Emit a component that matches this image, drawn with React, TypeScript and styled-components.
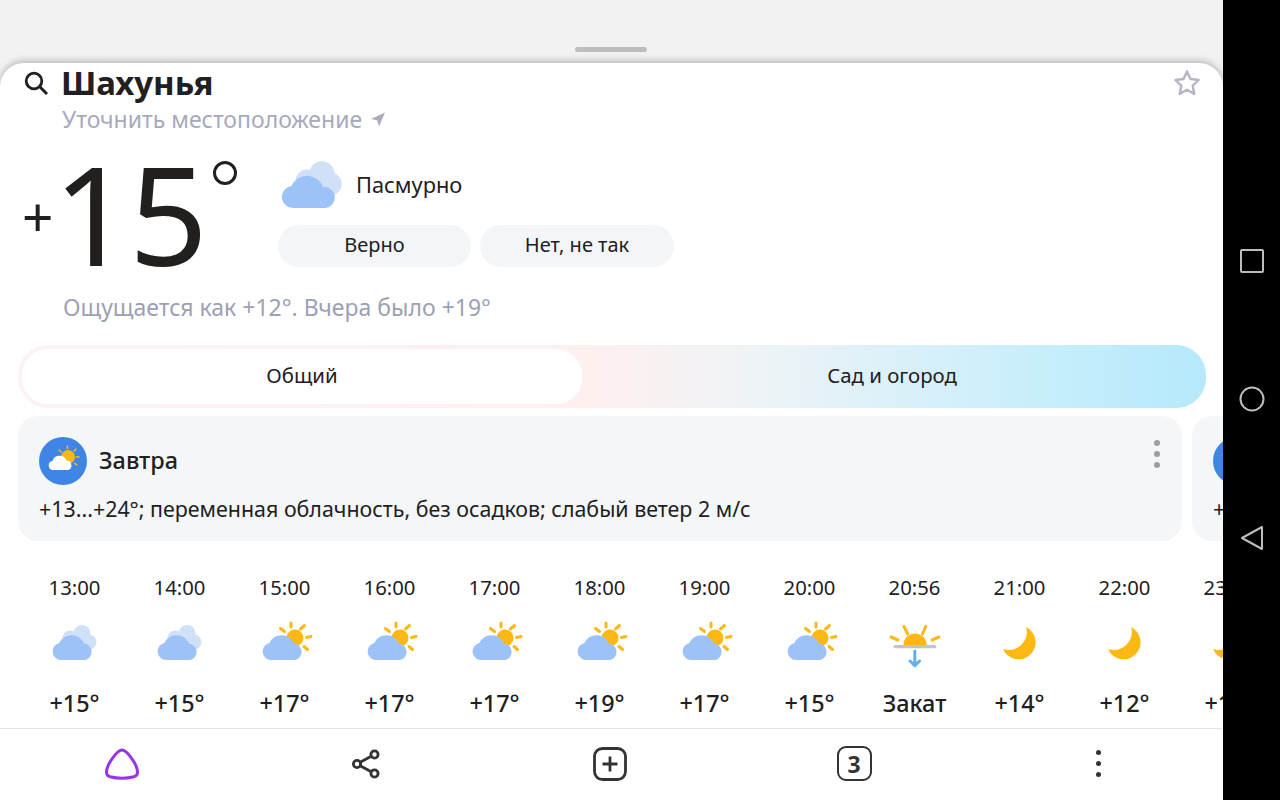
import React from 'react';
import styled, { createGlobalStyle } from 'styled-components';

const GlobalStyle = createGlobalStyle`
  html, body {
    margin: 0;
    padding: 0;
    background: #000;
  }
  * {
    box-sizing: border-box;
  }
`;

type Kind = 'cloudy' | 'partly' | 'sunset' | 'moon';

interface Hour {
  time: string;
  kind: Kind;
  value: string;
}

const hours: Hour[] = [
  { time: '13:00', kind: 'cloudy', value: '+15°' },
  { time: '14:00', kind: 'cloudy', value: '+15°' },
  { time: '15:00', kind: 'partly', value: '+17°' },
  { time: '16:00', kind: 'partly', value: '+17°' },
  { time: '17:00', kind: 'partly', value: '+17°' },
  { time: '18:00', kind: 'partly', value: '+19°' },
  { time: '19:00', kind: 'partly', value: '+17°' },
  { time: '20:00', kind: 'partly', value: '+15°' },
  { time: '20:56', kind: 'sunset', value: 'Закат' },
  { time: '21:00', kind: 'moon', value: '+14°' },
  { time: '22:00', kind: 'moon', value: '+12°' },
  { time: '23:00', kind: 'moon', value: '+11°' },
];

const CLOUD = 'M9 28a8.6 8.6 0 0 1-1.6-17 A13.4 13.4 0 0 1 32 11.6 A8.3 8.3 0 0 1 33 28 Z';

const Sun = () => (
  <g>
    <circle cx="33" cy="6" r="8.5" fill="#fdb813" />
    <g stroke="#fdb813" strokeWidth="3" strokeLinecap="round">
      <path d="M18.5 -3.5l4 3" />
      <path d="M29 -9v4" />
      <path d="M42.500 -6.500l-4 3.500" />
      <path d="M44.500 5.500l4.500 -1" />
      <path d="M42 14.500l3.500 3" />
    </g>
  </g>
);

const WeatherIcon = ({ kind }: { kind: Kind }) => {
  if (kind === 'moon') {
    return (
      <svg width="56" height="48" viewBox="0 0 56 48">
        <path d="M34 2 A17 17 0 1 1 11 24 A18 18 0 0 0 34 2 Z" fill="#fdb813" />
      </svg>
    );
  }
  if (kind === 'sunset') {
    return (
      <svg width="56" height="48" viewBox="0 0 56 48">
        <path d="M16.500 20 A11.500 11.500 0 0 1 39.500 20 Z" fill="#fdb813" />
        <rect x="6.500" y="20" width="43" height="3.200" rx="1.600" fill="#c4c4c4" />
        <g stroke="#fdb813" strokeWidth="3" strokeLinecap="round">
          <path d="M4 12l7 3" />
          <path d="M17 1.500l3.600 7.400" />
          <path d="M38.800 1.500L35.400 9" />
          <path d="M52 12l-7 3" />
        </g>
        <path
          d="M27.800 26v14M23 36l4.800 4.600L32.600 36"
          stroke="#62aeee"
          strokeWidth="3"
          fill="none"
          strokeLinecap="round"
          strokeLinejoin="round"
        />
      </svg>
    );
  }
  return (
    <svg width="56" height="48" viewBox="-5 -7 56 48" overflow="visible">
      {kind === 'cloudy' ? (
        <g fill="#d0e0f7">
          <circle cx="30" cy="1.500" r="8.500" />
          <circle cx="18" cy="6" r="7.500" />
          <circle cx="37" cy="10" r="7.500" />
        </g>
      ) : (
        <Sun />
      )}
      <path d={CLOUD} fill="#9cc2f7" />
    </svg>
  );
};

const App = () => {
  return (
    <Frame>
      <GlobalStyle />
      <Screen>
        <TopBar>
          <Handle />
        </TopBar>
        <Sheet>
          <Header>
            <TitleRow>
              <SearchGlyph viewBox="0 0 24 24">
                <circle cx="10" cy="10" r="7.800" fill="none" stroke="#21201f" strokeWidth="2.800" />
                <path d="M15.800 15.800L23 23" stroke="#21201f" strokeWidth="3" />
              </SearchGlyph>
              <Title>Шахунья</Title>
              <StarGlyph viewBox="0 0 28 27">
                <path
                  d="M14 2.400l3.500 7.600 8.200 1-6 5.700 1.600 8.200L14 20.800l-7.300 4.100 1.600-8.200-6-5.700 8.200-1z"
                  fill="none"
                  stroke="#b4b6c8"
                  strokeWidth="2.400"
                  strokeLinejoin="round"
                />
              </StarGlyph>
            </TitleRow>
            <Locate>
              Уточнить местоположение
              <svg width="16" height="16" viewBox="0 0 16 16">
                <path d="M15 1.500L1 8l6.200 1.300L9 15.400z" fill="#a9abbf" />
              </svg>
            </Locate>
          </Header>

          <Current>
            <Temperature>
              <Plus>+</Plus>
              <Digits>15</Digits>
              <Degree />
            </Temperature>
            <Condition>
              <ConditionRow>
                <BigCloud viewBox="0 0 62 50">
                  <g fill="#d0e0f7">
                    <circle cx="40" cy="14" r="12.700" />
                    <circle cx="25" cy="21" r="11.500" />
                    <circle cx="48" cy="24" r="11.700" />
                  </g>
                  <path
                    d="M11 48a11 11 0 0 1-1.600-21.900 A17 17 0 0 1 41 27 A10.500 10.500 0 0 1 43.500 48 Z"
                    fill="#9cc2f7"
                  />
                </BigCloud>
                <ConditionText>Пасмурно</ConditionText>
              </ConditionRow>
              <Answers>
                <Answer $width={193}>Верно</Answer>
                <Answer $width={194}>Нет, не так</Answer>
              </Answers>
            </Condition>
          </Current>

          <Feels>Ощущается как +12°. Вчера было +19°</Feels>

          <Tabs>
            <Tab $active>Общий</Tab>
            <Tab>Сад и огород</Tab>
          </Tabs>

          <Cards>
            <Card>
              <CardHead>
                <Badge>
                  <svg width="48" height="48" viewBox="0 0 48 48">
                    <circle cx="29" cy="20" r="7" fill="#fdb813" />
                    <g stroke="#fdb813" strokeWidth="1.500" strokeLinecap="round">
                      <path d="M20 13l2 2" />
                      <path d="M28.500 9v2.600" />
                      <path d="M37 12l-2 2" />
                      <path d="M40 20h-3" />
                      <path d="M38 28l-2.400-1.600" />
                    </g>
                    <path
                      d="M14 33a4.600 4.600 0 0 1-.6-9.100 A7.600 7.600 0 0 1 27.600 23.600 A4.800 4.800 0 0 1 29 33 Z"
                      fill="#fff"
                    />
                  </svg>
                </Badge>
                <CardTitle>Завтра</CardTitle>
                <CardDots>
                  <i />
                  <i />
                  <i />
                </CardDots>
              </CardHead>
              <CardText>+13...+24°; переменная облачность, без осадков; слабый ветер 2 м/с</CardText>
            </Card>
            <Card>
              <CardHead>
                <Badge />
              </CardHead>
              <CardText>+13</CardText>
            </Card>
          </Cards>

          <HourStrip>
            {hours.map((h) => (
              <HourCell key={h.time}>
                <HourTime>{h.time}</HourTime>
                <HourIcon>
                  <WeatherIcon kind={h.kind} />
                </HourIcon>
                <HourValue>{h.value}</HourValue>
              </HourCell>
            ))}
          </HourStrip>

          <Toolbar>
            <ToolButton>
              <svg width="36" height="36" viewBox="0 -1 36 36">
                <path
                  d="M18 3C22.500 3 33.500 17 33.500 25.500C33.500 28 32 29 30 29.700C23 31.500 13 31.500 6 29.700C4 29 2.500 28 2.500 25.500C2.500 17 13.500 3 18 3z"
                  fill="none"
                  stroke="#9933e6"
                  strokeWidth="3"
                />
              </svg>
            </ToolButton>
            <ToolButton>
              <svg width="36" height="36" viewBox="0 0 36 36">
                <g fill="none" stroke="#333" strokeWidth="2.800">
                  <circle cx="26.500" cy="8.500" r="3.600" />
                  <circle cx="9" cy="18" r="3.600" />
                  <circle cx="26.500" cy="27.500" r="3.600" />
                  <path d="M12.200 16.200l11-6M12.200 19.800l11 6" />
                </g>
              </svg>
            </ToolButton>
            <ToolButton>
              <svg width="36" height="36" viewBox="0 0 36 36">
                <rect x="2.500" y="2.500" width="31" height="31" rx="8" fill="none" stroke="#333" strokeWidth="2.800" />
                <path d="M18 10.500v15M10.500 18h15" stroke="#333" strokeWidth="2.800" />
              </svg>
            </ToolButton>
            <ToolButton>
              <TabCount>3</TabCount>
            </ToolButton>
            <ToolButton>
              <MenuDots>
                <i />
                <i />
                <i />
              </MenuDots>
            </ToolButton>
          </Toolbar>
        </Sheet>
      </Screen>

      <NavBar>
        <svg width="24" height="24" viewBox="0 0 24 24">
          <rect x="1" y="1" width="22" height="22" rx="1" fill="none" stroke="#bdbdbd" strokeWidth="2" />
        </svg>
        <svg width="26" height="26" viewBox="0 0 26 26">
          <circle cx="13" cy="13" r="11.500" fill="none" stroke="#bdbdbd" strokeWidth="2" />
        </svg>
        <svg width="24" height="26" viewBox="0 0 24 26">
          <path d="M22 2v22L2 13z" fill="none" stroke="#bdbdbd" strokeWidth="2" strokeLinejoin="round" />
        </svg>
      </NavBar>
    </Frame>
  );
};

export default App;

const Frame = styled.div`
  display: flex;
  width: 1280px;
  height: 800px;
  overflow: hidden;
  font-family: 'Noto Sans', 'Open Sans', sans-serif;
  color: #21201f;
`;

const Screen = styled.div`
  display: flex;
  flex-direction: column;
  width: 1223px;
  height: 800px;
  background: #f2f2f2;
`;

const TopBar = styled.div`
  display: flex;
  justify-content: center;
  align-items: flex-end;
  flex: 0 0 63px;
  padding: 0 2px 11px 0;
`;

const Handle = styled.div`
  width: 72px;
  height: 5px;
  border-radius: 3px;
  background: #bdbdbd;
`;

const Sheet = styled.div`
  display: flex;
  flex-direction: column;
  flex: 1;
  min-height: 0;
  background: #fff;
  border-radius: 24px 24px 0 0;
  box-shadow: 0 -2px 7px rgba(0, 0, 0, 0.25);
  overflow: hidden;
`;

const Header = styled.div`
  padding: 0 24px;
`;

const TitleRow = styled.div`
  display: flex;
  align-items: center;
  height: 40px;
`;

const SearchGlyph = styled.svg`
  width: 24px;
  height: 24px;
  margin-right: 14px;
`;

const StarGlyph = styled.svg`
  width: 28px;
  height: 27px;
  margin-left: auto;
  margin-right: -2px;
  margin-top: -2px;
`;

const Title = styled.div`
  font-size: 33px;
  line-height: 40px;
  font-weight: 700;
  margin-left: -1px;
  padding-bottom: 1px;
`;

const Locate = styled.div`
  display: flex;
  align-items: center;
  gap: 8px;
  margin-left: 38px;
  padding-bottom: 2px;
  height: 34px;
  font-size: 23px;
  line-height: 32px;
  color: #a7a9bd;
`;

const Current = styled.div`
  display: flex;
  padding: 0 24px;
  height: 136px;
  margin-top: 6px;
`;

const Temperature = styled.div`
  display: flex;
  flex: 0 0 254px;
  position: relative;
`;

const Plus = styled.span`
  font-size: 55px;
  font-weight: 400;
  line-height: 54px;
  margin-top: 46px;
  width: 38px;
  margin-left: -2px;
  margin-right: 2px;
`;

const Digits = styled.span`
  font-size: 138px;
  font-weight: 400;
  line-height: 136px;
  letter-spacing: -3px;
  margin-top: 1px;
  margin-left: -9px;
`;

const Degree = styled.span`
  position: absolute;
  left: 189px;
  top: 18px;
  width: 24px;
  height: 24px;
  border: 3.500px solid #21201f;
  border-radius: 50%;
`;

const Condition = styled.div`
  display: flex;
  flex-direction: column;
`;

const ConditionRow = styled.div`
  display: flex;
  align-items: center;
  height: 66px;
  margin-top: 9px;
  padding-left: 4px;
`;

const BigCloud = styled.svg`
  width: 62px;
  height: 50px;
`;

const ConditionText = styled.span`
  font-size: 21.800px;
  margin-left: 12px;
  padding-bottom: 2px;
`;

const Answers = styled.div`
  display: flex;
  gap: 9px;
  margin-top: 7px;
`;

const Answer = styled.div<{ $width: number }>`
  display: flex;
  align-items: center;
  justify-content: center;
  width: ${(p) => p.$width}px;
  height: 42px;
  padding-bottom: 3px;
  border-radius: 21px;
  background: #f3f5f8;
  font-size: 20px;
`;

const Feels = styled.div`
  margin: 12px 0 0 63px;
  font-size: 23px;
  line-height: 32px;
  color: #9d9fb5;
`;

const Tabs = styled.div`
  display: flex;
  width: 1188px;
  height: 63px;
  margin: 22px 0 0 18px;
  padding: 4px;
  border-radius: 30px;
  background: linear-gradient(90deg, #fdf1f8 0%, #fff0f0 48%, #eef3f6 62%, #c9eefb 85%, #b5e9fb 100%);
`;

const Tab = styled.div<{ $active?: boolean }>`
  display: flex;
  align-items: center;
  justify-content: center;
  height: 55px;
  padding-bottom: 3px;
  flex: ${(p) => (p.$active ? '0 0 560px' : '1')};
  border-radius: 26px;
  background: ${(p) => (p.$active ? '#fff' : 'transparent')};
  font-size: 20.400px;
`;

const Cards = styled.div`
  display: flex;
  gap: 10px;
  margin: 8px 0 0 18px;
`;

const Card = styled.div`
  flex: 0 0 1164px;
  height: 125px;
  padding: 21px 21px 0;
  border-radius: 20px;
  background: #f4f6f8;
`;

const CardHead = styled.div`
  display: flex;
  align-items: center;
  height: 48px;
`;

const Badge = styled.div`
  width: 48px;
  height: 48px;
  border-radius: 50%;
  background: #3f85e6;
  flex: none;
`;

const CardTitle = styled.div`
  margin-left: 12px;
  padding-bottom: 2px;
  font-size: 23.400px;
  font-weight: 500;
`;

const CardDots = styled.div`
  display: flex;
  flex-direction: column;
  gap: 5px;
  margin-left: auto;
  margin-top: -15px;
  margin-right: 1px;

  & > i {
    width: 6px;
    height: 6px;
    border-radius: 50%;
    background: #9e9e9e;
  }
`;

const CardText = styled.div`
  margin-top: 9px;
  font-size: 21.400px;
  line-height: 30px;
  white-space: nowrap;
`;

const HourStrip = styled.div`
  display: flex;
  margin: 31px 0 0 22px;
`;

const HourCell = styled.div`
  display: flex;
  flex-direction: column;
  align-items: center;
  flex: 0 0 105px;
`;

const HourTime = styled.div`
  font-size: 20.300px;
  line-height: 30px;
`;

const HourIcon = styled.div`
  display: flex;
  align-items: center;
  justify-content: center;
  height: 48px;
  margin-top: 23px;
`;

const HourValue = styled.div`
  margin-top: 14px;
  font-size: 23.400px;
  line-height: 32px;
  font-weight: 500;
`;

const Toolbar = styled.div`
  display: grid;
  flex: none;
  grid-template-columns: repeat(5, 244px);
  align-items: center;
  margin-top: auto;
  height: 72px;
  border-top: 1px solid #e2e2e2;
  background: #fff;
`;

const ToolButton = styled.div`
  display: flex;
  align-items: center;
  justify-content: center;
  height: 100%;
  padding-bottom: 2px;
`;

const TabCount = styled.div`
  display: flex;
  align-items: center;
  justify-content: center;
  width: 35px;
  height: 35px;
  border: 2.800px solid #333;
  border-radius: 9px;
  font-size: 23px;
  font-weight: 700;
  color: #333;
`;

const MenuDots = styled.div`
  display: flex;
  flex-direction: column;
  gap: 6px;

  & > i {
    width: 5px;
    height: 5px;
    border-radius: 50%;
    background: #333;
  }
`;

const NavBar = styled.div`
  display: flex;
  flex-direction: column;
  align-items: center;
  justify-content: center;
  gap: 113px;
  flex: 0 0 57px;
  background: #000;
`;
